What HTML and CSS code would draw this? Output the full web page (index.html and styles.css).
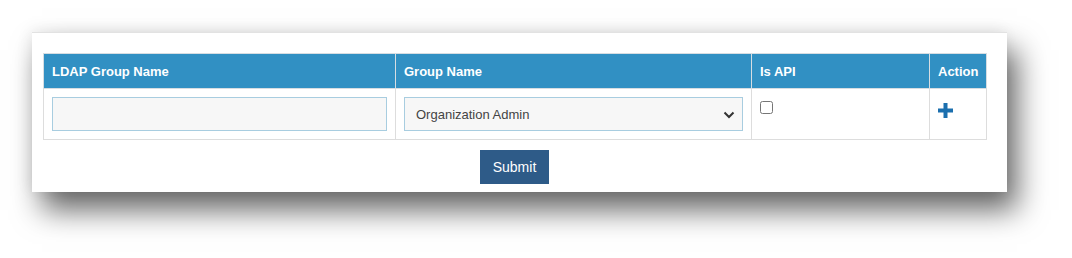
FILE: index.html
```html
<!DOCTYPE html>
<html>
<head>
    <title>LDAP Group Mapping</title>
    <link rel="stylesheet" href="styles.css">
</head>
<body>
    <div class="page">
        <div class="card">
            <table class="mapping-table">
                <colgroup>
                    <col class="col-ldap">
                    <col class="col-group">
                    <col class="col-api">
                    <col class="col-action">
                </colgroup>
                <thead>
                    <tr>
                        <th>LDAP Group Name</th>
                        <th>Group Name</th>
                        <th>Is API</th>
                        <th>Action</th>
                    </tr>
                </thead>
                <tbody>
                    <tr>
                        <td><input type="text" class="field" name="ldap_group"></td>
                        <td>
                            <div class="select-wrap">
                                <select class="field select" name="group">
                                    <option>Organization Admin</option>
                                </select>
                                <svg class="caret" width="12" height="8" viewBox="0 0 12 8">
                                    <path d="M1.5 1.5 L6 6 L10.5 1.5" fill="none" stroke="#333" stroke-width="2"/>
                                </svg>
                            </div>
                        </td>
                        <td><input type="checkbox" class="check" name="is_api"></td>
                        <td>
                            <svg class="plus" width="15" height="15" viewBox="0 0 15 15">
                                <rect x="5.5" y="0" width="4" height="15" fill="#1b6fae"/>
                                <rect x="0" y="5.5" width="15" height="4" fill="#1b6fae"/>
                            </svg>
                        </td>
                    </tr>
                </tbody>
            </table>
            <div class="actions">
                <button type="submit" class="btn-submit">Submit</button>
            </div>
        </div>
    </div>
</body>
</html>
```

FILE: styles.css
```css
html, body {
    min-height: 258px;
}

body {
    margin: 0;
    background-color: #fff;
    font-family: Arial, "Liberation Sans", sans-serif;
}

.page {
    padding: 32px 0 66px 32px;
}

.card {
    width: 975px;
    box-sizing: border-box;
    background-color: #fff;
    border-top: 1px solid #e2e2e2;
    padding: 20px 21px 8px 11px;
    box-shadow: 10px 18px 28px rgba(0,0,0,0.6), -2px -2px 14px rgba(0,0,0,0.07);
}

.mapping-table {
    width: 943px;
    border-collapse: collapse;
    table-layout: fixed;
}

.col-ldap { width: 352px; }
.col-group { width: 356px; }
.col-api { width: 178px; }
.col-action { width: 57px; }

.mapping-table th {
    background-color: #3190c3;
    color: #fff;
    font-weight: bold;
    font-size: 13px;
    text-align: left;
    height: 34px;
    padding: 0 8px;
    border: 1px solid #d6dde2;
}

.mapping-table td {
    height: 50px;
    padding: 8px;
    box-sizing: border-box;
    border: 1px solid #dddddd;
    vertical-align: top;
}

.field {
    display: block;
    width: 100%;
    height: 34px;
    box-sizing: border-box;
    background-color: #f7f7f7;
    border: 1px solid #a8cde0;
    border-radius: 0;
    font-family: Arial, "Liberation Sans", sans-serif;
    font-size: 13px;
    color: #444;
    padding: 0 11px;
    outline: none;
}

.select-wrap {
    position: relative;
}

.select {
    -webkit-appearance: none;
    appearance: none;
}

.caret {
    position: absolute;
    right: 8px;
    top: 14px;
}

.check {
    margin: 4px 0 0 0;
    width: 13px;
    height: 13px;
}

.plus {
    display: block;
    margin: 6px 0 0 0;
}

.actions {
    text-align: center;
    padding-top: 10px;
}

.btn-submit {
    background-color: #2e5b88;
    color: #fff;
    font-family: Arial, "Liberation Sans", sans-serif;
    font-size: 14px;
    border: none;
    width: 69px;
    height: 34px;
    border-radius: 0;
    cursor: pointer;
}
```
